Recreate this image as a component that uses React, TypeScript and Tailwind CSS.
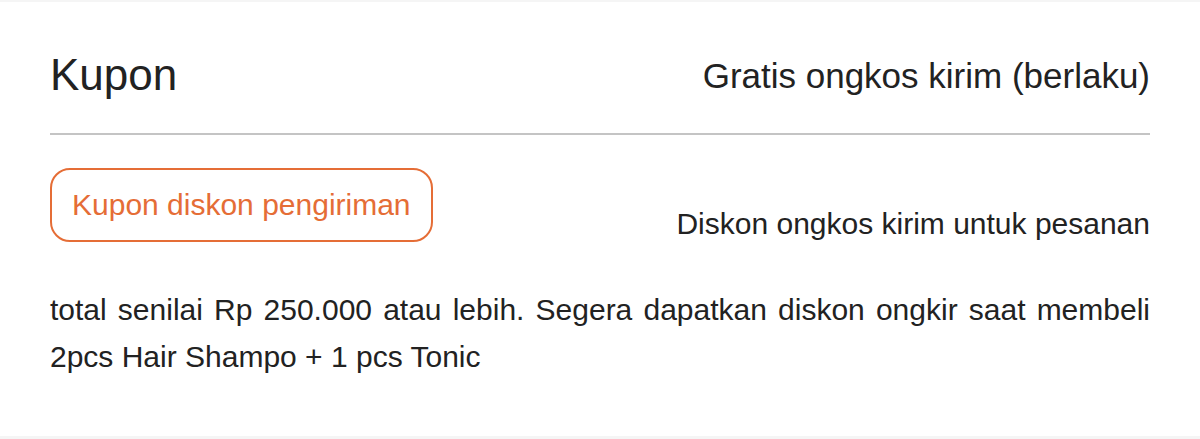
import React from 'react';

export default function App() {
  return (
    <div className="min-h-[439px] bg-[#f5f5f5] pt-[2px] pb-[3px]" style={{ fontFamily: '"Liberation Sans", Arial, sans-serif' }}>
      <div className="h-[434px] bg-white px-[50px] pt-[51px]">
        {/* header */}
        <div className="flex items-center justify-between">
          <h2 className="text-[44px] leading-none text-[#222]">Kupon</h2>
          <span className="text-[35px] leading-none text-[#222]">Gratis ongkos kirim (berlaku)</span>
        </div>
        <div className="mt-[36px] h-[2px] bg-[#c4c4c4]" />

        {/* coupon row */}
        <div className="mt-[33px] flex items-end justify-between">
          <button className="h-[74px] rounded-[20px] border-2 border-[#e56d36] px-[20px] text-[30px] leading-none text-[#e56d36]">
            Kupon diskon pengiriman
          </button>
          <span className="mb-[1px] text-[30px] leading-[34px] text-[#222]">Diskon ongkos kirim untuk pesanan</span>
        </div>

        <p className="mt-[44px] text-justify text-[30px] leading-[47px] text-[#222]">
          total senilai Rp 250.000 atau lebih. Segera dapatkan diskon ongkir saat membeli 2pcs Hair Shampo + 1 pcs Tonic
        </p>
      </div>
    </div>
  );
}
